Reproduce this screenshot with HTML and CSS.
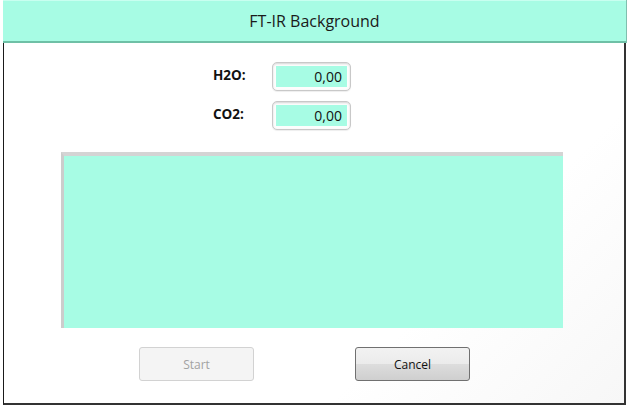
FILE: index.html
```html
<!DOCTYPE html>
<html>
<head>
<meta charset="utf-8">
<link rel="stylesheet" href="styles.css">
</head>
<body>
<div class="window">
  <div class="title">FT-IR Background</div>
  <div class="content">
    <div class="fields">
      <div class="label">H2O:</div>
      <div class="input"><span class="value">0,00</span></div>
      <div class="label">CO2:</div>
      <div class="input"><span class="value">0,00</span></div>
    </div>
    <div class="plot"><div class="plot-inner"></div></div>
    <div class="buttons">
      <button class="btn disabled">Start</button>
      <button class="btn">Cancel</button>
    </div>
  </div>
</div>
</body>
</html>
```
FILE: styles.css
```css
html, body {
  margin: 0;
  padding: 0;
  background: #ffffff;
  width: 630px;
  height: 407px;
  overflow: hidden;
  font-family: "Open Sans", "Noto Sans", sans-serif;
}
.window {
  margin-left: 3px;
  width: 623px;
  display: flex;
  flex-direction: column;
}
.title {
  background: #a7fce4;
  border-top: 1px solid #c8fff0;
  border-bottom: 2px solid #6fc0a6;
  box-shadow: 1px 0 0 #7fbfae;
  display: flex;
  align-items: center;
  justify-content: center;
  font-size: 16px;
  color: #1a1a1a;
  box-sizing: border-box;
  height: 43px;
  padding-bottom: 1px;
}
.content {
  height: 360px;
  border-left: 1px solid #1a1a1a;
  border-right: 2px solid #333;
  border-bottom: 2px solid #333;
  width: 620px;
  background: linear-gradient(135deg, #ffffff 70%, #f7f7f7 100%);
  display: flex;
  flex-direction: column;
}
.fields {
  margin-top: 19px;
  display: grid;
  grid-template-columns: 34px 79px;
  column-gap: 25px;
  row-gap: 10px;
  margin-left: 209px;
  align-items: center;
}
.label {
  font-weight: bold;
  font-size: 13.5px;
  color: #111;
  margin-top: -4px;
}
.input {
  height: 29px;
  box-sizing: border-box;
  border: 1px solid #c8c8c8;
  border-radius: 5px;
  padding: 3px;
  background: #fdfdfd;
  box-shadow: inset 0 1px 2px #d6d6d6, 0 1px 1px #eeeeee;
}
.value {
  display: block;
  height: 100%;
  background: #a7fce4;
  text-align: right;
  font-size: 14px;
  line-height: 22px;
  padding-right: 5px;
  color: #111;
}
.plot {
  margin-top: 22px;
  margin-left: 57px;
  width: 499px;
  border-top: 4px solid #d4d4d4;
  border-left: 3px solid #cccccc;
}
.plot-inner {
  height: 172px;
  background: #a7fce4;
}
.buttons {
  margin-top: 19px;
  display: flex;
  gap: 101px;
  margin-left: 135px;
}
.btn {
  width: 115px;
  height: 34px;
  border: 1px solid #707070;
  border-radius: 3px;
  background: linear-gradient(#f2f2f2 0%, #ebebeb 50%, #dddddd 50%, #cfcfcf 100%);
  font-family: "Open Sans", "Noto Sans", sans-serif;
  font-size: 12px;
  color: #111;
  padding: 0;
}
.btn.disabled {
  border-color: #d2d2d2;
  background: #f4f4f4;
  color: #a2a2a2;
}
```
